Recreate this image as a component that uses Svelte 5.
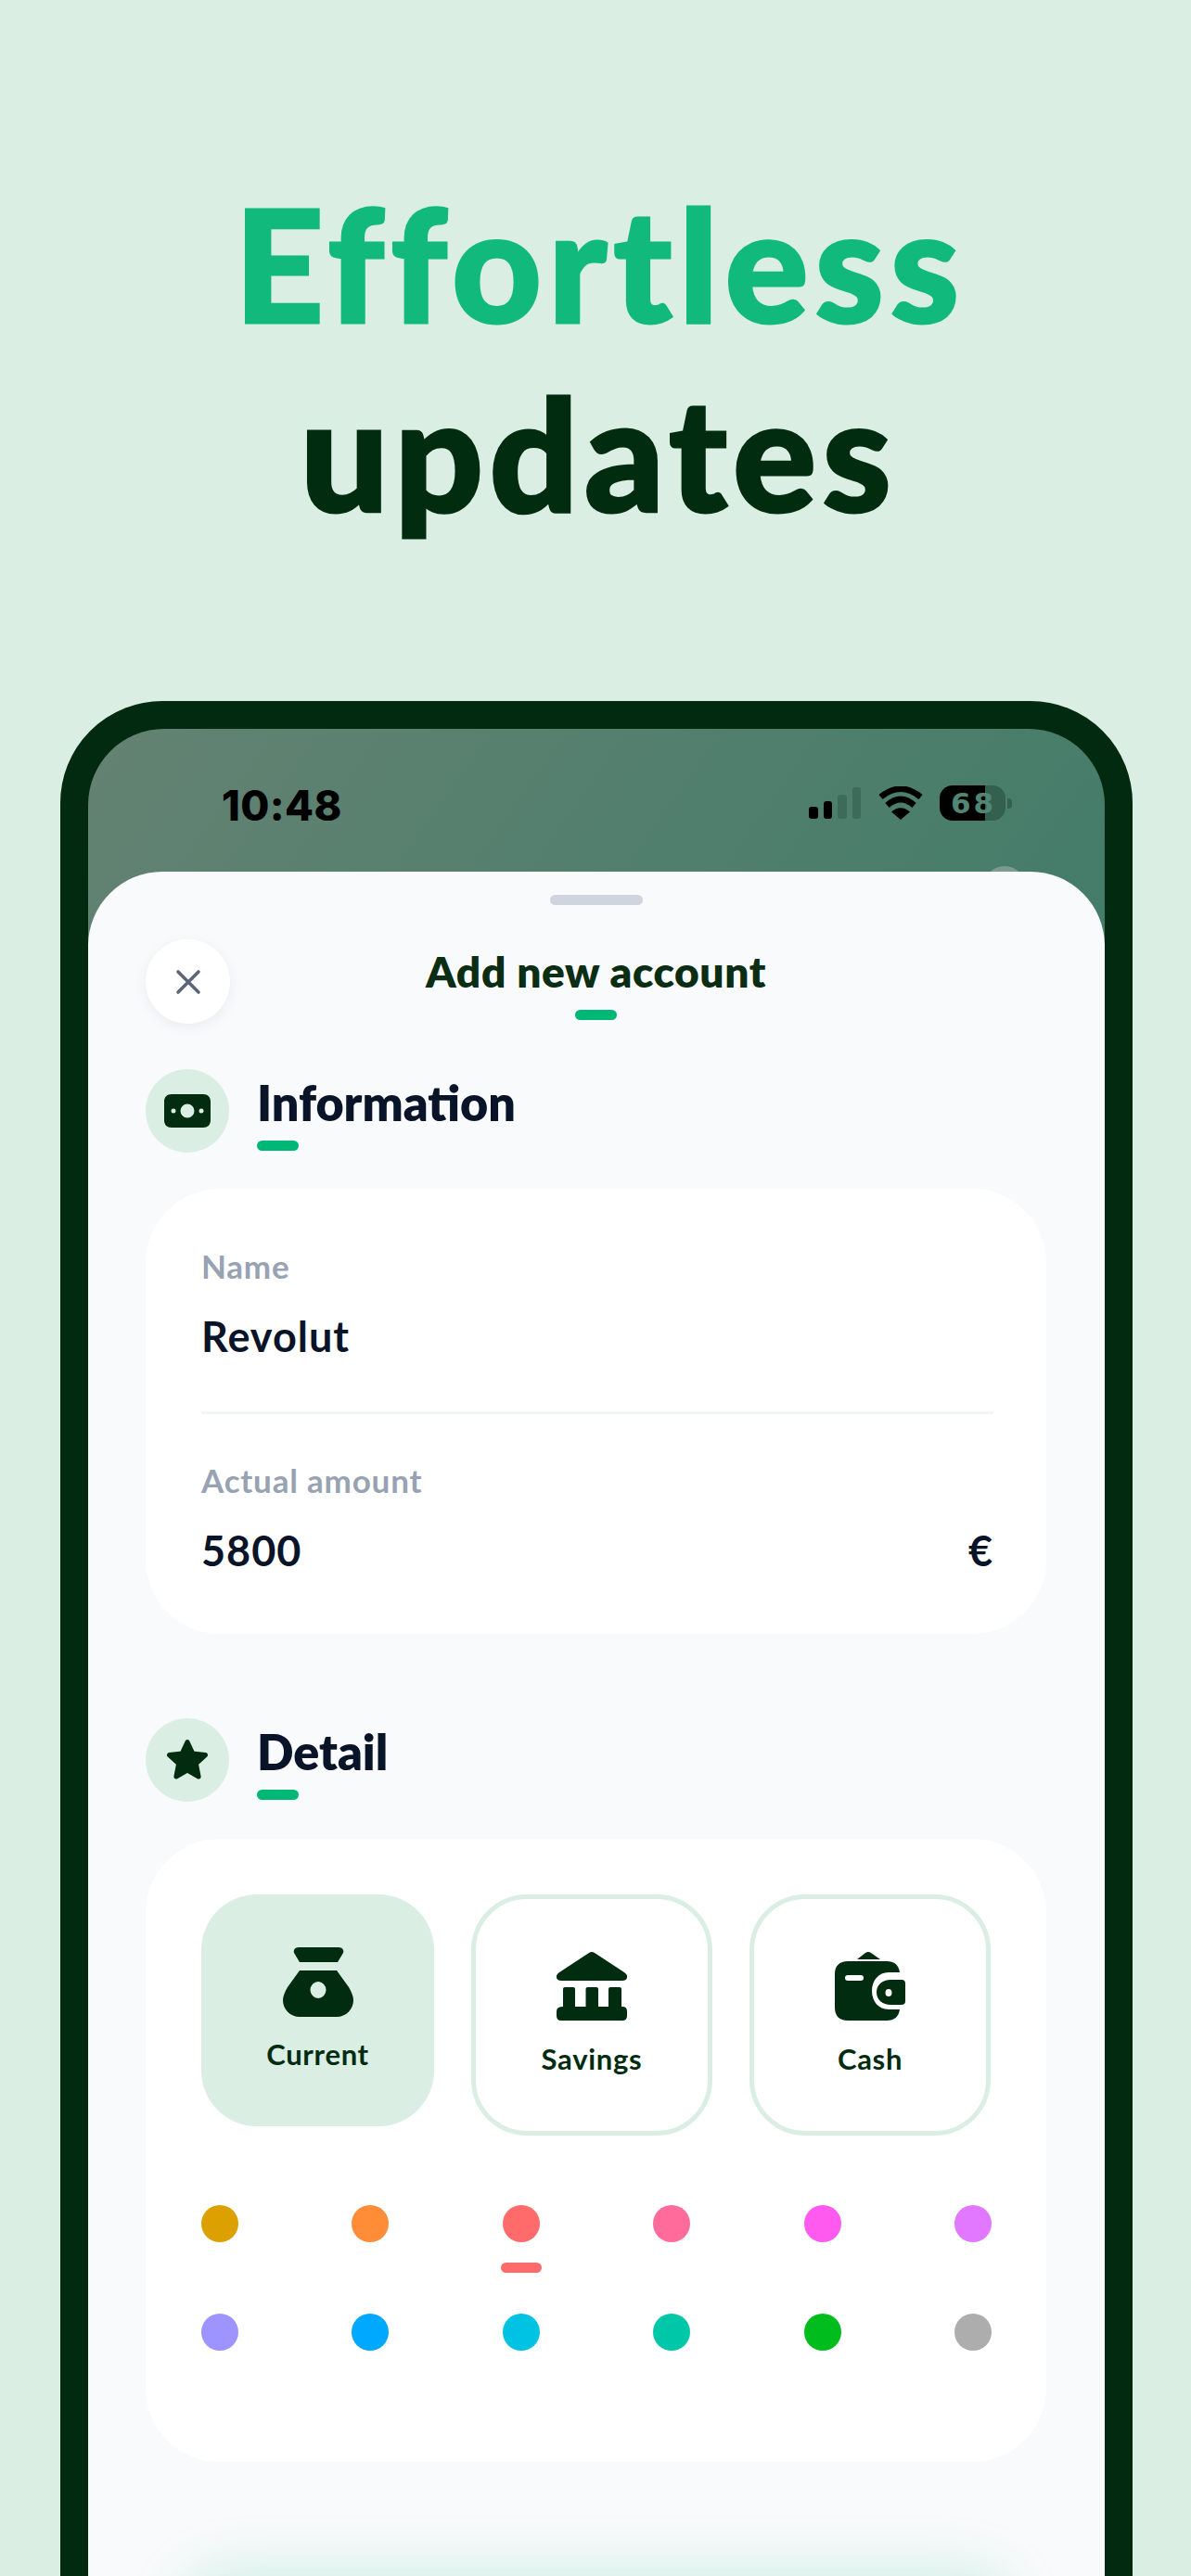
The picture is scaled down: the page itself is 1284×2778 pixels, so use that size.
<script>
  const row1 = ['#dca000', '#ff8c37', '#ff6b6b', '#ff6b9b', '#ff5af0', '#e278ff'];
  const row2 = ['#9e94ff', '#00a8ff', '#00c2e2', '#00c7a8', '#00bd1e', '#adadad'];
</script>

<div class="page">
  <h1 class="hero">
    <span class="hero-green">Effortless</span>
    <span class="hero-dark">updates</span>
  </h1>

  <div class="phone">
    <div class="screen">
      <span class="peek"></span>
      <div class="status">
        <span class="time">10:48</span>
        <div class="status-icons">
          <div class="signal">
            <i class="b1"></i><i class="b2"></i><i class="b3"></i><i class="b4"></i>
          </div>
          <svg class="wifi" width="48" height="36" viewBox="0 0 48 36">
            <path d="M24 36 L14 27.5 Q24 19 34 27.5Z" fill="#000" />
            <path d="M9.5 20.5 Q24 7.5 38.5 20.5" fill="none" stroke="#000" stroke-width="6.5" />
            <path d="M2.5 11.5 Q24 -6 45.5 11.5" fill="none" stroke="#000" stroke-width="6.5" />
          </svg>
          <div class="battery"><span>68</span></div>
          <i class="nub"></i>
        </div>
      </div>

      <div class="sheet">
        <div class="handle"></div>

        <header class="top">
          <button class="close" aria-label="Close">
            <svg width="28" height="28" viewBox="0 0 28 28">
              <path d="M3 3 L25 25 M25 3 L3 25" stroke="#5c6478" stroke-width="3.6" stroke-linecap="round" fill="none" />
            </svg>
          </button>
          <div class="top-title">
            <span>Add new account</span>
            <i class="bar"></i>
          </div>
        </header>

        <section class="sec-head first">
          <div class="badge">
            <svg width="50" height="36" viewBox="0 0 50 36">
              <path fill-rule="evenodd" fill="#022c10" d="M8 0H42C47 0 50 3 50 8V28C50 33 47 36 42 36H8C3 36 0 33 0 28V8C0 3 3 0 8 0ZM25 10.5A7.5 7.5 0 1 0 25 25.5A7.5 7.5 0 1 0 25 10.5ZM10 15.5A2.5 2.5 0 1 0 10 20.5A2.5 2.5 0 1 0 10 15.5ZM40 15.5A2.5 2.5 0 1 0 40 20.5A2.5 2.5 0 1 0 40 15.5Z" />
            </svg>
          </div>
          <div class="sec-title">
            <h2>Information</h2>
            <i class="bar"></i>
          </div>
        </section>

        <div class="card info">
          <div class="field first-field">
            <div class="label">Name</div>
            <div class="value">Revolut</div>
          </div>
          <div class="field">
            <div class="label">Actual amount</div>
            <div class="value spread"><span>5800</span><span>€</span></div>
          </div>
        </div>

        <section class="sec-head detail">
          <div class="badge">
            <svg width="46" height="46" viewBox="0 0 46 46">
              <polygon points="23,3.5 28.8,16 42.5,17.6 32.4,27 35.1,41 23,34 10.9,41 13.6,27 3.5,17.6 17.2,16" fill="#022c10" stroke="#022c10" stroke-width="5" stroke-linejoin="round" />
            </svg>
          </div>
          <div class="sec-title">
            <h2>Detail</h2>
            <i class="bar"></i>
          </div>
        </section>

        <div class="card kinds">
          <div class="tiles">
            <div class="tile active">
              <svg width="76" height="77" viewBox="0 0 76 77">
                <path fill="#022c10" d="M17 1H60C64 1 66 4 65 7L59 17H18L12 7C11 4 13 1 17 1Z" />
                <path fill="#022c10" fill-rule="evenodd" d="M18 26H58L71 44C74 49 76 54 76 58C76 68 68 76 58 76H18C8 76 0 68 0 58C0 54 2 49 5 44ZM38 38A8.5 9 0 1 0 38 56A8.5 9 0 1 0 38 38Z" />
              </svg>
              <span>Current</span>
            </div>
            <div class="tile">
              <svg width="76" height="74" viewBox="0 0 76 74">
                <path fill="#022c10" d="M35 1Q38 -1 41 1L73 22Q77 25 76 28Q75 31 71 31H5Q1 31 0 28Q-1 25 3 22Z" />
                <path fill="#022c10" d="M9 38H18Q20 38 20 40V59H31.5V40Q31.5 38 33.5 38H43Q45 38 45 40V59H56V40Q56 38 58 38H68Q70 38 70 40V59H71Q76 59 76 64V69Q76 74 71 74H5Q0 74 0 69V64Q0 59 7 59V40Q7 38 9 38Z" />
              </svg>
              <span>Savings</span>
            </div>
            <div class="tile">
              <svg width="76" height="74" viewBox="0 0 76 74">
                <path fill="#022c10" d="M33 1Q36 -1 39 1L49 8H24Z" />
                <path fill="#022c10" fill-rule="evenodd" d="M14 10H56C64 10 69 14 70 22H58C47 22 40 31 40 42C40 53 47 62 58 62H70C69 70 64 74 56 74H14C5 74 0 69 0 60V24C0 15 5 10 14 10ZM14 25A3 3 0 0 0 14 31H28A3 3 0 0 0 28 25Z" />
                <path fill="#022c10" fill-rule="evenodd" d="M60 30H72Q76 30 76 34V53Q76 57 72 57H60C52 57 45 52 45 43.5C45 35 52 30 60 30ZM58 40A3.5 4 0 1 0 58 48A3.5 4 0 1 0 58 40Z" />
              </svg>
              <span>Cash</span>
            </div>
          </div>

          <div class="dots first-dots">
            {#each row1 as c, i}
              <span class="dot" style="background:{c}">
                {#if i === 2}<i class="mark" style="background:{c}"></i>{/if}
              </span>
            {/each}
          </div>
          <div class="dots second-dots">
            {#each row2 as c}
              <span class="dot" style="background:{c}"></span>
            {/each}
          </div>
        </div>

        <div class="glow"></div>
      </div>
    </div>
  </div>
</div>

<style>
  :global(body) {
    margin: 0;
    background: #daeee4;
  }
  .page {
    width: 1284px;
    height: 2778px;
    overflow: hidden;
    background: #daeee4;
    font-family: Lato, "Noto Sans", sans-serif;
  }
  .hero {
    margin: 0;
    padding-top: 181px;
    height: 756px;
    box-sizing: border-box;
    text-align: center;
    font-size: 168px;
    font-weight: 900;
    line-height: 204px;
    -webkit-text-stroke: 3px currentColor;
  }
  .hero span {
    display: block;
  }
  .hero-green {
    color: #12b97c;
    letter-spacing: 7px;
    padding-left: 10px;
  }
  .hero-dark {
    color: #022c10;
    letter-spacing: 6.4px;
    padding-left: 7px;
  }
  .phone {
    margin-left: 65px;
    width: 1156px;
    height: 2100px;
    box-sizing: border-box;
    border: 30px solid #022a10;
    border-radius: 110px 110px 0 0;
    background: #022a10;
  }
  .screen {
    position: relative;
    height: 100%;
    border-radius: 82px 82px 0 0;
    overflow: hidden;
    background: linear-gradient(125deg, #648272 0, #3f7c68 1150px);
  }
  .peek {
    position: absolute;
    left: 965px;
    top: 148px;
    width: 46px;
    height: 46px;
    border-radius: 50%;
    background: #7d9a8e;
  }
  .status {
    height: 154px;
    display: flex;
    justify-content: space-between;
    align-items: flex-start;
    padding: 61px 100px 0 144px;
    box-sizing: border-box;
    position: relative;
  }
  .time {
    font-family: Inter, sans-serif;
    font-weight: 800;
    font-size: 45px;
    letter-spacing: 0.4px;
    line-height: 44px;
    color: #000;
  }
  .status-icons {
    display: flex;
    align-items: center;
    height: 38px;
  }
  .signal {
    display: flex;
    align-items: flex-end;
    gap: 6px;
    height: 34px;
    margin-right: 19px;
    align-self: flex-end;
    margin-bottom: 2px;
  }
  .signal i {
    width: 9.5px;
    border-radius: 3px;
    background: #000;
  }
  .b1 { height: 13px; }
  .b2 { height: 19px; }
  .signal .b3 { height: 26px; background: #3d6b59; }
  .signal .b4 { height: 34px; background: #3d6b59; }
  .wifi {
    margin-right: 18px;
  }
  .battery {
    width: 71px;
    height: 38px;
    border-radius: 14px;
    background: linear-gradient(90deg, #000 69%, #33604f 69%);
    display: flex;
    align-items: center;
    justify-content: center;
  }
  .battery span {
    font-family: "DejaVu Sans", sans-serif;
    font-weight: 700;
    font-size: 31px;
    letter-spacing: 3px;
    line-height: 38px;
    color: #528674;
    margin-left: 2px;
  }
  .nub {
    width: 5px;
    height: 11px;
    margin-left: 2px;
    border-radius: 0 4px 4px 0;
    background: #33604f;
  }
  .sheet {
    position: relative;
    height: 1900px;
    box-sizing: border-box;
    padding: 25px 63px 0 62px;
    background: #f9fafc;
    border-radius: 80px 80px 0 0;
  }
  .handle {
    width: 100px;
    height: 11px;
    margin: 0 auto;
    border-radius: 6px;
    background: #d0d4de;
  }
  .top {
    margin-top: 37px;
    display: grid;
    grid-template-columns: 91px 1fr 91px;
    height: 91px;
  }
  .close {
    width: 91px;
    height: 91px;
    padding: 0;
    border: 0;
    border-radius: 50%;
    background: #fff;
    box-shadow: 0 4px 14px rgba(40, 50, 70, 0.07);
    display: flex;
    align-items: center;
    justify-content: center;
  }
  .top-title {
    display: flex;
    flex-direction: column;
    align-items: center;
    padding-top: 8px;
    color: #0a2d14;
    font-size: 46px;
    font-weight: 800;
    letter-spacing: 0.6px;
    line-height: 54px;
  }
  .bar {
    display: block;
    width: 45px;
    height: 11px;
    border-radius: 6px;
    background: #00b876;
  }
  .top-title .bar {
    margin-top: 14px;
  }
  .sec-head {
    display: flex;
    gap: 30px;
    height: 90px;
  }
  .sec-head.first {
    margin-top: 49px;
  }
  .sec-head.detail {
    margin-top: 91px;
  }
  .badge {
    width: 90px;
    height: 90px;
    border-radius: 50%;
    background: #daeee4;
    display: flex;
    align-items: center;
    justify-content: center;
  }
  .sec-title {
    padding-top: 6px;
  }
  .sec-title h2 {
    margin: 0 0 11px;
    color: #0a1428;
    font-size: 52px;
    font-weight: 800;
    letter-spacing: 0;
    line-height: 60px;
  }
  .card {
    background: #fff;
    border-radius: 80px;
    margin-top: 39px;
    width: 971px;
    box-sizing: border-box;
  }
  .info {
    height: 480px;
    padding: 63px 57px 0 60px;
  }
  .field.first-field {
    padding-bottom: 56px;
    border-bottom: 3px solid #f2f4f6;
    margin-bottom: 51px;
  }
  .label {
    color: #97a2b2;
    font-size: 35px;
    font-weight: 700;
    letter-spacing: 0.8px;
    line-height: 40px;
  }
  .value {
    margin-top: 31px;
    color: #0a1428;
    font-size: 45px;
    font-weight: 700;
    letter-spacing: 1px;
    line-height: 50px;
  }
  .spread {
    display: flex;
    justify-content: space-between;
  }
  .kinds {
    height: 672px;
    margin-top: 40px;
    padding: 60px 59px 0 60px;
  }
  .tiles {
    display: flex;
    align-items: flex-start;
    gap: 40px;
  }
  .tile {
    width: 260px;
    height: 260px;
    box-sizing: border-box;
    padding-top: 57px;
    border: 5px solid #daeee4;
    border-radius: 60px;
    display: flex;
    flex-direction: column;
    align-items: center;
    color: #022c10;
  }
  .tile span {
    margin-top: 21px;
    font-size: 31px;
    font-weight: 700;
    letter-spacing: 0.7px;
    line-height: 40px;
  }
  .tile.active {
    width: 251px;
    height: 250px;
    padding-top: 56px;
    border: 0;
    background: #daeee4;
  }
  .tile.active span {
    margin-top: 19px;
  }
  .dots {
    display: flex;
    justify-content: space-between;
    width: 852px;
  }
  .first-dots {
    margin-top: 75px;
  }
  .second-dots {
    margin-top: 77px;
  }
  .dot {
    position: relative;
    width: 40px;
    height: 40px;
    border-radius: 50%;
  }
  .mark {
    position: absolute;
    left: -2px;
    top: 62px;
    width: 44px;
    height: 11px;
    border-radius: 6px;
  }
  .glow {
    margin: 123px auto 0;
    width: 880px;
    height: 100px;
    border-radius: 40px;
    background: #daf3ea;
    box-shadow: 0 0 60px 10px rgba(0, 184, 118, 0.16);
  }
</style>
